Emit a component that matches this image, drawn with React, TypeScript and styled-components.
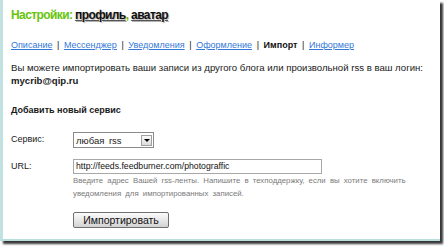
import React from "react";
import styled, { createGlobalStyle } from "styled-components";

const Global = createGlobalStyle`
  html, body { margin: 0; padding: 0; background: #fff; }
  body { font-family: "Liberation Sans", Arial, sans-serif; }
`;

const Stage = styled.div`
  width: 444px;
  height: 246px;
  overflow: hidden;
  background: #fff;
`;

const Panel = styled.div`
  box-sizing: border-box;
  width: 440px;
  height: 241px;
  background: #fff;
  border-left: 3px solid #c2e2e2;
  border-bottom: 2px solid #b8dede;
  box-shadow: 3px 3px 2px rgba(20, 20, 20, 0.85);
  padding: 6px 0 0 8px;
  color: #1a1a1a;
`;

const Title = styled.h1`
  margin: 0;
  font-size: 12px;
  font-weight: bold;
  line-height: 18px;
  letter-spacing: -0.6px;
  color: #66c40c;
`;

const TitleLink = styled.a`
  color: #111;
  text-decoration: underline;
  text-decoration-color: #555;
  text-decoration-thickness: 1px;
  text-underline-offset: 1px;
  text-shadow: 1px 1px 1px #b0b0b0;
`;

const Nav = styled.div`
  margin-top: 15px;
  font-size: 9px;
  line-height: 12px;
  color: #222;
`;

const NavLink = styled.a`
  color: #3478d8;
  text-decoration: underline;
`;

const NavCurrent = styled.b`
  color: #111;
`;

const Sep = styled.span`
  margin: 0 4.6px;
`;

const Para = styled.p`
  margin: 10px 0 0;
  font-size: 9.6px;
  line-height: 13px;
  color: #1a1a1a;
  width: 420px;
`;

const Heading = styled.div`
  margin-top: 16px;
  font-size: 9px;
  font-weight: bold;
  line-height: 14px;
`;

const Row = styled.div<{ $top: number }>`
  display: grid;
  grid-template-columns: 62px 1fr;
  align-items: start;
  margin-top: ${(p) => p.$top}px;
  font-size: 9px;
`;

const Label = styled.div<{ $pad: number }>`
  padding-top: ${(p) => p.$pad}px;
  line-height: 13px;
`;

const Select = styled.div`
  box-sizing: border-box;
  width: 81px;
  height: 16px;
  border: 1px solid #8a8a8a;
  display: flex;
  align-items: center;
  justify-content: space-between;
  padding: 0 1px 0 2px;
  font-size: 9.5px;
  word-spacing: 2px;
  color: #222;
`;

const Arrow = styled.div`
  width: 11px;
  height: 11px;
  background: linear-gradient(#fafafa, #dcdcdc);
  border: 1px solid #a0a0a0;
  box-sizing: border-box;
  display: flex;
  align-items: center;
  justify-content: center;
  &::after {
    content: "";
    border-left: 3px solid transparent;
    border-right: 3px solid transparent;
    border-top: 3px solid #000;
  }
`;

const Input = styled.div`
  box-sizing: border-box;
  width: 249px;
  height: 15px;
  border: 1px solid #a8a8a8;
  padding: 0 2px;
  font-size: 8.7px;
  line-height: 13px;
  color: #111;
`;

const Help = styled.div`
  font-size: 7.8px;
  line-height: 13px;
  color: #7a7a7a;
  white-space: nowrap;
  word-spacing: 2px;
`;

const Button = styled.button`
  display: block;
  margin-top: 12px;
  box-sizing: border-box;
  width: 96px;
  height: 16px;
  border: 1px solid #6f6f6f;
  border-radius: 2px;
  background: linear-gradient(#fbfbfb, #e8e8e8 50%, #d2d2d2);
  font-family: "Liberation Sans", Arial, sans-serif;
  font-size: 10.5px;
  line-height: 14px;
  color: #111;
  padding: 0;
`;

export default function App() {
  return (
    <Stage>
      <Global />
      <Panel>
        <Title>
          Настройки: <TitleLink>профиль</TitleLink>, <TitleLink>аватар</TitleLink>
        </Title>
        <Nav>
          <NavLink>Описание</NavLink>
          <Sep>|</Sep>
          <NavLink>Мессенджер</NavLink>
          <Sep>|</Sep>
          <NavLink>Уведомления</NavLink>
          <Sep>|</Sep>
          <NavLink>Оформление</NavLink>
          <Sep>|</Sep>
          <NavCurrent>Импорт</NavCurrent>
          <Sep>|</Sep>
          <NavLink>Информер</NavLink>
        </Nav>
        <Para>
          Вы можете импортировать ваши записи из другого блога или произвольной rss в ваш логин:{" "}
          <b>mycrib@qip.ru</b>
        </Para>
        <Heading>Добавить новый сервис</Heading>
        <Row $top={15}>
          <Label $pad={1}>Сервис:</Label>
          <Select>
            <span>любая rss</span>
            <Arrow />
          </Select>
        </Row>
        <Row $top={11}>
          <Label $pad={1}>URL:</Label>
          <div>
            <Input>http://feeds.feedburner.com/photograffic</Input>
            <Help>
              Введите адрес Вашей rss-ленты. Напишите в техподдержку, если вы хотите включить
              <br />
              уведомления для импортированных записей.
            </Help>
            <Button>Импортировать</Button>
          </div>
        </Row>
      </Panel>
    </Stage>
  );
}
